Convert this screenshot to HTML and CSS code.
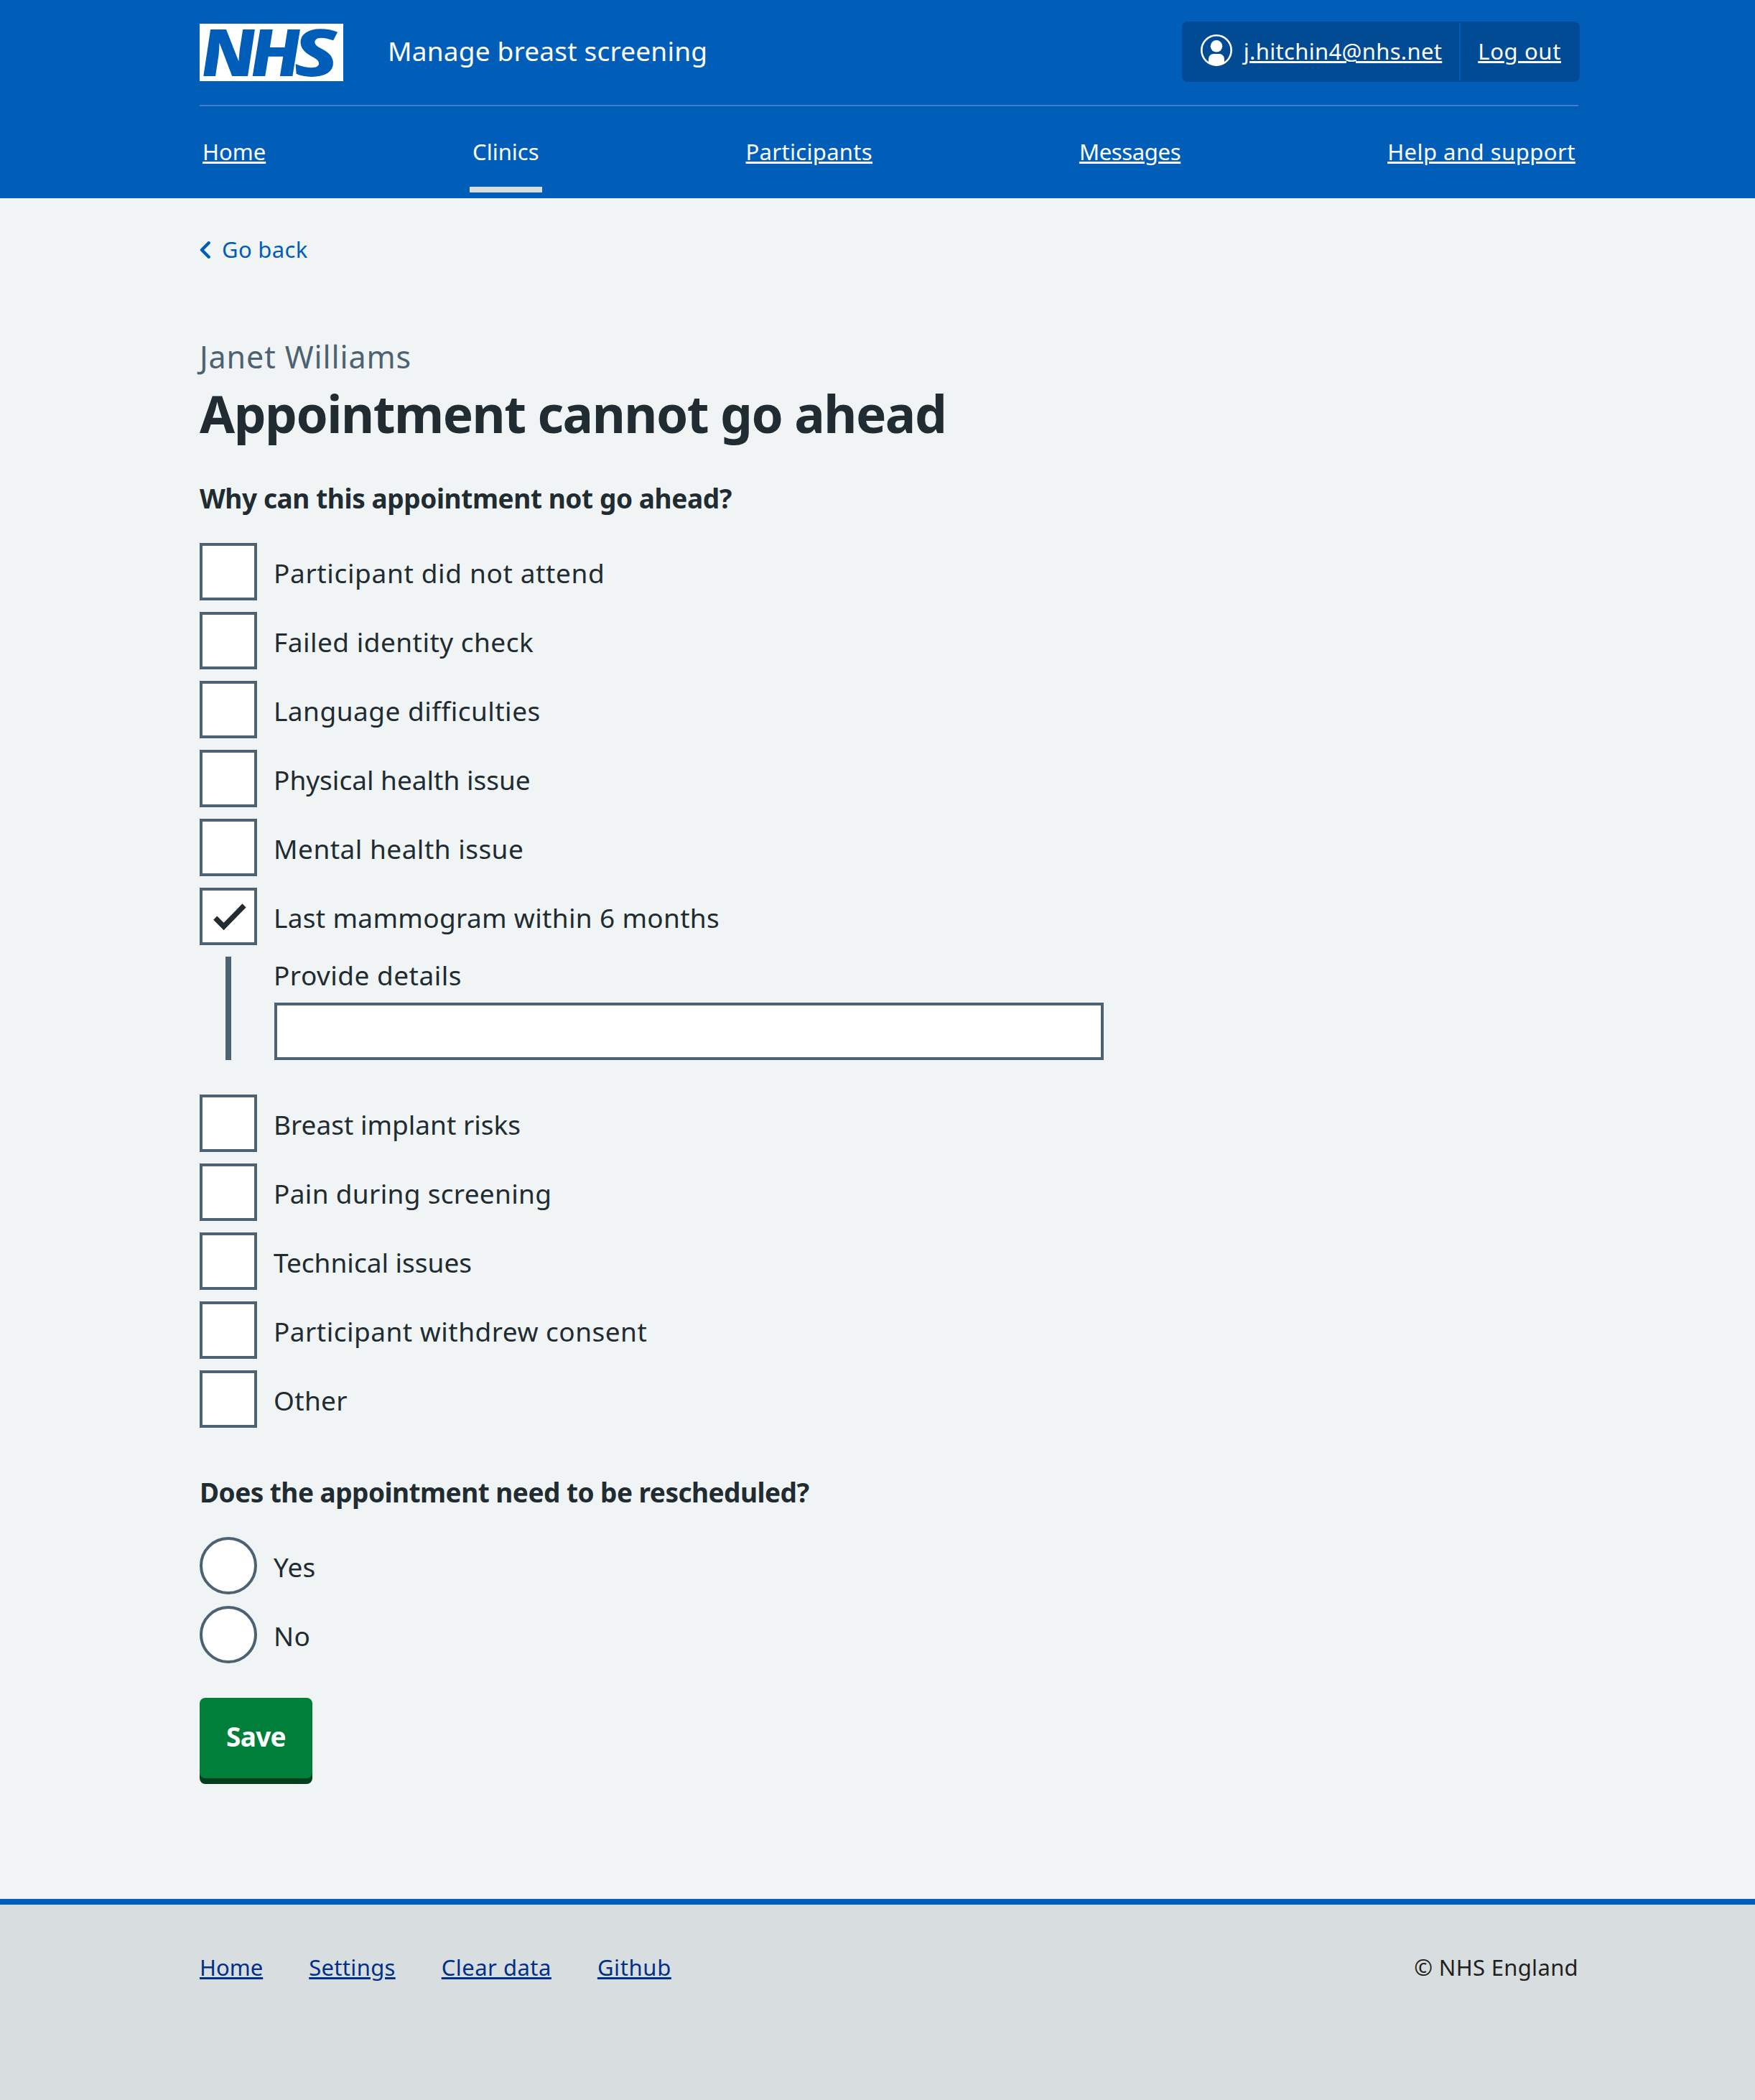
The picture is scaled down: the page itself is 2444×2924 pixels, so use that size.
FILE: index.html
```
<!DOCTYPE html>
<html lang="en">
<head>
<meta charset="utf-8">
<title>Appointment cannot go ahead - Manage breast screening</title>
<link rel="stylesheet" href="styles.css">
</head>
<body>
<header class="header">
  <div class="container">
    <div class="header-top">
      <svg class="logo" viewBox="0 0 200 80" role="img" aria-label="NHS">
        <rect width="200" height="80" fill="#fff"/>
        <text class="logo-text logo-text-heavy" transform="translate(3.7 72.5) skewX(4.4)" textLength="77.7" lengthAdjust="spacingAndGlyphs">N</text>
        <text class="logo-text" transform="translate(71.5 72.5) skewX(4.4)" textLength="73" lengthAdjust="spacingAndGlyphs">H</text>
        <text class="logo-text" transform="translate(132.6 72.5) skewX(4.4)" textLength="63" lengthAdjust="spacingAndGlyphs">S</text>
      </svg>
      <span class="service">Manage breast screening</span>
      <div class="account">
        <span class="account-item">
          <svg class="user-icon" viewBox="0 0 44 44" aria-hidden="true">
            <circle cx="22" cy="22" r="20.7" fill="none" stroke="#fff" stroke-width="2.6"/>
            <circle cx="22" cy="16.3" r="8.3" fill="#fff"/>
            <path d="M11 40V34a7 7 0 0 1 7-7h8a7 7 0 0 1 7 7v6a21 21 0 0 1-22 0z" fill="#fff"/>
          </svg>
          <a class="link" href="#">j.hitchin4@nhs.net</a>
        </span>
        <span class="account-item"><a class="link wider" href="#">Log out</a></span>
      </div>
    </div>
    <nav class="nav">
      <a class="nav-item tight" href="#">Home</a>
      <a class="nav-item tight current" href="#">Clinics</a>
      <a class="nav-item" href="#">Participants</a>
      <a class="nav-item tighter" href="#">Messages</a>
      <a class="nav-item wide" href="#">Help and support</a>
    </nav>
  </div>
</header>
<main class="container main">
  <a class="back" href="#">
    <svg class="chevron" viewBox="0 0 15 24" aria-hidden="true"><path d="M12.7 2.3 3 12l9.7 9.7" fill="none" stroke="#005eb8" stroke-width="4.4" stroke-linecap="round" stroke-linejoin="round"/></svg>
    <span>Go back</span>
  </a>
  <div class="caption">Janet Williams</div>
  <h1 class="title">Appointment cannot go ahead</h1>
  <form>
    <h2 class="legend">Why can this appointment not go ahead?</h2>
    <div class="options">
      <label class="option wider"><span class="box"></span><span class="label">Participant did not attend</span></label>
      <label class="option wide"><span class="box"></span><span class="label">Failed identity check</span></label>
      <label class="option wide"><span class="box"></span><span class="label">Language difficulties</span></label>
      <label class="option tight"><span class="box"></span><span class="label">Physical health issue</span></label>
      <label class="option wide"><span class="box"></span><span class="label">Mental health issue</span></label>
      <label class="option"><span class="box"><svg class="tick" viewBox="4 4 72 72" aria-hidden="true"><path d="M19.2 44.7 24.3 39.5 33.6 48.8 59.5 22.3 64.6 27.4 33.6 59.2z" fill="#212b32"/></svg></span><span class="label">Last mammogram within 6 months</span></label>
      <div class="conditional">
        <label class="details-label wide" for="details">Provide details</label>
        <input class="details" id="details" type="text">
      </div>
      <label class="option tight"><span class="box"></span><span class="label">Breast implant risks</span></label>
      <label class="option"><span class="box"></span><span class="label">Pain during screening</span></label>
      <label class="option tight"><span class="box"></span><span class="label">Technical issues</span></label>
      <label class="option wide"><span class="box"></span><span class="label">Participant withdrew consent</span></label>
      <label class="option"><span class="box"></span><span class="label">Other</span></label>
    </div>
    <h2 class="legend legend-second">Does the appointment need to be rescheduled?</h2>
    <div class="options">
      <label class="option"><span class="box round"></span><span class="label">Yes</span></label>
      <label class="option"><span class="box round"></span><span class="label">No</span></label>
    </div>
    <button class="save" type="button">Save</button>
  </form>
</main>
<footer class="footer">
  <div class="container footer-row">
    <a class="footer-link tight" href="#">Home</a>
    <a class="footer-link" href="#">Settings</a>
    <a class="footer-link wide" href="#">Clear data</a>
    <a class="footer-link wider" href="#">Github</a>
    <span class="copyright">© NHS England</span>
  </div>
</footer>
</body>
</html>
```
FILE: styles.css
```
* { box-sizing: border-box; }

body {
  margin: 0;
  min-height: 2924px;
  display: flex;
  flex-direction: column;
  background: #f0f4f5;
  color: #212b32;
  font-family: "Noto Sans", "Open Sans", sans-serif;
  font-size: 37px;
  line-height: 52px;
  letter-spacing: 0.32px;
}

.container { width: 1920px; margin: 0 246px 0 278px; }

/* Letter spacing adjustments */
.tighter { letter-spacing: -0.35px; }
.tight { letter-spacing: 0; }
.wide { letter-spacing: 0.48px; }
.wider { letter-spacing: 0.64px; }

/* Header */
.header { height: 276px; background: #005eb8; color: #fff; }
.header-top {
  height: 148px;
  display: flex;
  align-items: center;
  border-bottom: 2px solid #407fc8;
}
.logo { display: block; width: 200px; height: 80px; overflow: visible; }
.logo-text {
  font-family: "Noto Sans", "Open Sans", sans-serif;
  font-size: 91px;
  font-weight: 800;
  font-style: italic;
  letter-spacing: 0;
  fill: #005eb8;
}
.logo-text-heavy { font-family: "Open Sans", "Noto Sans", sans-serif; }
.service { margin-left: 62px; padding-bottom: 5px; letter-spacing: 0.2px; }
.account {
  display: flex;
  height: 80px;
  margin: 0 0 2px auto;
  background: #004b93;
  border-radius: 6px;
  box-shadow: 0 0 0 2px #004b93;
  font-size: 31px;
  line-height: 48px;
}
.account-item { display: flex; align-items: center; padding: 0 24px 2px; }
.account-item + .account-item { border-left: 2px solid #005eb8; }
.user-icon { width: 44px; height: 44px; margin: 0 16px 2px 0; }
.link { color: #fff; text-decoration-thickness: 3px; text-underline-offset: 2px; }
.nav { display: flex; justify-content: space-between; font-size: 31px; line-height: 48px; }
.nav-item {
  display: flex;
  align-items: center;
  height: 120px;
  padding: 14px 4px 0;
  border-bottom: 8px solid transparent;
  color: #fff;
  text-decoration-thickness: 3px;
  text-underline-offset: 2px;
}
.nav-item.current { border-bottom-color: #d8dde0; text-decoration: none; }

/* Main */
.main { flex: 1; }
.back {
  display: flex;
  align-items: center;
  gap: 16px;
  margin-top: 47px;
  color: #005eb8;
  font-size: 31px;
  line-height: 48px;
  text-decoration: none;
}
.chevron { width: 15px; height: 24px; margin-top: 2px; }
.caption {
  margin-top: 94px;
  color: #4c6272;
  font-size: 43px;
  line-height: 64px;
  letter-spacing: 0.88px;
}
.title {
  margin: 0;
  font-size: 71px;
  line-height: 94px;
  letter-spacing: -1.5px;
}
.legend { margin: 45px 0 36px; font-size: 37px; line-height: 52px; letter-spacing: -0.41px; }
.legend-second { margin-top: 64px; letter-spacing: -0.53px; }
.options { display: flex; flex-direction: column; gap: 16px; }
.option { display: flex; align-items: center; height: 80px; }
.box { width: 80px; height: 80px; border: 4px solid #4c6272; background: #fff; }
.round { border-radius: 50%; }
.tick { display: block; width: 72px; height: 72px; }
.label { margin-left: 23px; padding-top: 3px; }
.conditional {
  display: flex;
  flex-direction: column;
  gap: 12px;
  margin: 0 0 32px 36px;
  padding-left: 60px;
  border-left: 8px solid #4c6272;
}
.details-label { margin-left: -1px; }
.details {
  width: 1155px;
  height: 80px;
  margin: 0;
  padding: 0 8px;
  border: 4px solid #4c6272;
  border-radius: 0;
  background: #fff;
  font: inherit;
}
.save {
  display: block;
  width: 157px;
  height: 112px;
  margin: 48px 0 168px;
  padding: 0 0 4px;
  border: 0;
  border-radius: 8px;
  background: #007f3b;
  box-shadow: 0 8px 0 #00401e;
  color: #fff;
  font: 700 37px/52px "Noto Sans", "Open Sans", sans-serif;
  letter-spacing: -0.7px;
}

/* Footer */
.footer { height: 280px; border-top: 8px solid #005eb8; background: #d8dde0; }
.footer-row { display: flex; gap: 64px; padding-top: 63px; font-size: 31px; line-height: 48px; }
.footer-link { color: #003087; text-decoration-thickness: 3px; text-underline-offset: 2px; }
.copyright { margin-left: auto; color: #231f20; }
```
